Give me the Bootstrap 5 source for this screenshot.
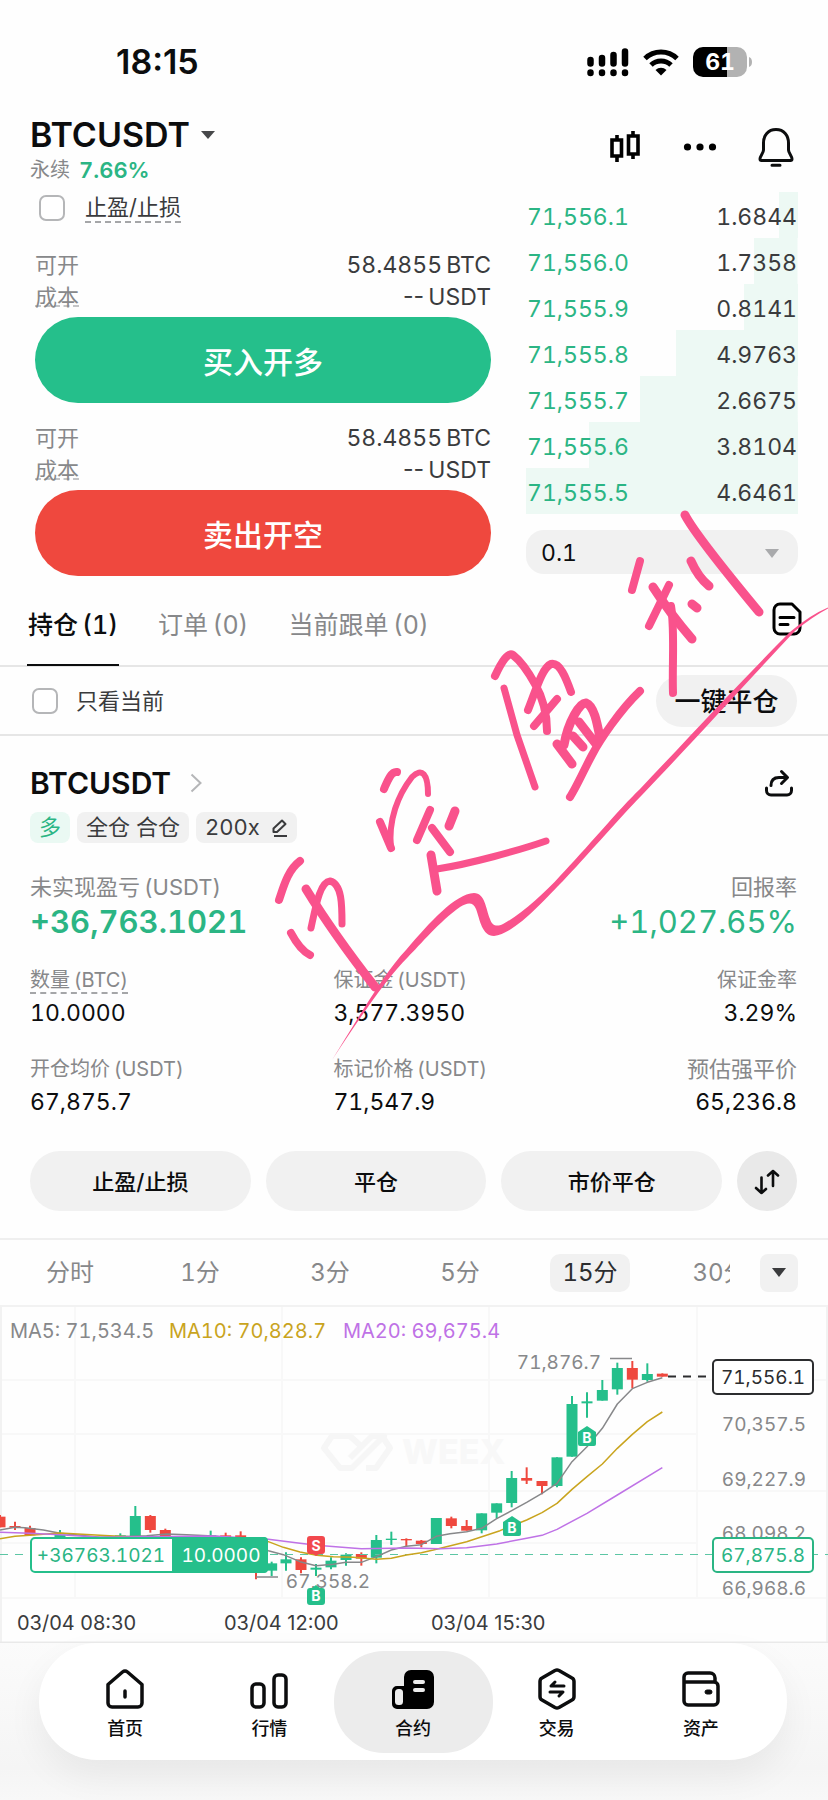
<!DOCTYPE html>
<html lang="zh-CN">
<head>
<meta charset="utf-8">
<meta name="viewport" content="width=device-width, initial-scale=1">
<title>BTCUSDT 永续</title>
<link href="https://cdn.jsdelivr.net/npm/bootstrap@5.3.0/dist/css/bootstrap.min.css" rel="stylesheet">
<style>
:root { --up:#25bf8b; --up-text:#2bb584; --down:#ef483e; --ink:#0c0d0e; --muted:#87888a; --line:#e6e6e6; --pill:#f1f1f1; --pink:#f9528c; }
body { font-family:Inter,"Noto Sans CJK SC",sans-serif; font-size:22px; line-height:32px; font-variant-numeric:tabular-nums; color:var(--ink); background:#fefefe; overflow-x:hidden; }
button, select { font-family:inherit; color:inherit; font-variant-numeric:inherit; }
a { color:inherit; text-decoration:none; }
svg { display:block; flex-shrink:0; }
.up { color:var(--up-text); }
.dim { color:var(--muted); }
.dark-soft { color:#3a3b3d; }
.prop-nums { font-variant-numeric:normal; }
.plain-btn { border:0; background:none; padding:0; }
.status { height:117px; padding:6px 76px 0 116px; }
.clock { font-size:34px; font-weight:600; }
.batt { width:59px; height:30px; }
.topbar { height:66px; padding:0 34px 0 30px; }
.pair { font-size:34px; line-height:36px; font-weight:600; }
.sub { font-size:22px; line-height:26px; margin-top:4px; }
.sub span:first-child { font-size:20px; }
.tools { height:60px; }
.trade { display:grid; grid-template-columns:456fr 272fr; column-gap:35px; padding:0 30px 8px 35px; }
.tick.form-check-input { width:26px; height:26px; margin:0; border:2px solid #b5b6b8; border-radius:7px; background-color:#fff; flex-shrink:0; }
.dashed { border-bottom:2px dashed #a5a6a8; line-height:28px; }
.dashed.tight { height:26px; line-height:32px; border-color:#c4c5c7; }
.tpsl { height:50px; padding-left:4px; gap:20px; }
.pair-row { height:32px; }
.pair-row .dark-soft { font-size:23px; }
.cta { height:86px; border:0; border-radius:43px; font-size:30px; font-weight:500; color:#fff; margin-top:4px; padding:3px 0 0; }
.cta.buy { background:var(--up); }
.cta.sell { background:var(--down); }
.book { padding-top:9px; }
.book-row { height:46px; font-size:23px; padding:3px 1px 0 1px; color:#3a3b3d; background:linear-gradient(#edf9f4,#edf9f4) right/var(--depth) 100% no-repeat; }
.step-wrap { margin-top:16px; }
.step-wrap select { height:44px; border:0; border-radius:18px; background:var(--pill); font-size:23px; line-height:32px; padding:7px 15px 5px; appearance:none; }
.step-wrap svg { position:absolute; right:19px; top:19px; }
.tabs { height:83px; border-bottom:2px solid var(--line); padding:0 26px 0 27px; }
.tabs .plain-btn { font-size:25px; height:83px; color:var(--muted); margin-right:38px; white-space:nowrap; border-bottom:2px solid transparent; padding:2px 1px 0; }
.tabs .plain-btn.active { color:var(--ink); font-weight:500; border-color:var(--ink); }
.tabs .doc { margin:0 0 12px; }
.filter { height:69px; border-bottom:2px solid var(--line); padding:0 31px 0 32px; }
.close-all { height:52px; width:141px; border:0; border-radius:26px; background:var(--pill); font-size:26px; font-weight:500; padding:3px 0 0; white-space:nowrap; }
.position { padding:30px 31px 27px 30px; border-bottom:2px solid #efefef; }
.pos-name { font-size:30px; line-height:34px; font-weight:600; }
.chip { height:31px; line-height:31px; border-radius:8px; background:var(--pill); padding:0 9px; color:#3a3b3d; }
.chip.long { background:#eaf9f3; color:var(--up-text); }
.label-line { line-height:30px; color:var(--muted); white-space:nowrap; }
.big { font-size:31px; line-height:40px; }
.metrics { display:grid; grid-template-columns:303fr 230fr 233fr; row-gap:25px; margin-top:23px; }
.metrics .label-line { font-size:20px; }
.metrics .label-line.wide { font-size:22px; }
.metrics .val { font-size:23px; line-height:32px; margin-top:2px; }
.act { height:60px; border:0; border-radius:30px; background:var(--pill); font-weight:500; padding:1px 0 0; flex:1 1 0; }
.act.round { flex:0 0 60px; background:#e9e9e9; }
.frames { height:65px; padding-right:30px; }
.frames-scroll { overflow:hidden; padding-left:5px; margin-right:30px; }
.frames-scroll .slot { flex:0 0 130px; text-align:center; }
.frames .plain-btn { font-size:24px; height:38px; line-height:38px; color:var(--muted); }
.frames .plain-btn.on { width:80px; border-radius:10px; background:var(--pill); color:#2c2d2f; }
.frames .more { flex:0 0 38px; border-radius:8px; background:var(--pill); }
.chart text { font-family:Inter,"Noto Sans CJK SC",sans-serif; font-size:19px; }
.chart .legend { font-size:20px; }
.chart .axis { font-size:20px; font-variant-numeric:normal; }
.chart .mark-letter { font-size:14px; }
.chart .brand { font-size:34px; }
.dock { background:linear-gradient(#fbfbfb,#f5f5f5 80%,#f8f8f8); padding:0 41px 40px 39px; }
.dock-bar { height:117px; border-radius:58px; background:#fff; padding:0 14px; box-shadow:0 16px 36px rgba(0,0,0,.06); }
.dock-bar a { flex:1 1 0; font-size:18px; line-height:26px; font-weight:500; height:102px; gap:6px; border-radius:50px; padding-top:7px; }
.dock-bar a.on { background:#ececec; margin:0 -8px; flex:0 0 159px; }
.scrawl { position:absolute; left:0; top:0; width:100%; pointer-events:none; }
</style>
</head>
<body>
<div class="position-relative">

<header>
  <div class="status d-flex align-items-center justify-content-between">
    <span class="clock prop-nums">18:15</span>
    <div class="d-flex align-items-center" style="gap:14px">
      <svg width="43" height="30" viewBox="0 0 43 30" stroke="#000" stroke-width="6.500" stroke-linecap="round">
        <path d="M4.500 13v3.500M16 11v5.500M27.500 8v8.500M39 4.500v12M4.500 25.500v.5M16 25.500v.5M27.500 25.500v.5M39 25.500v.5"/>
      </svg>
      <svg width="36" height="28" viewBox="0 0 36 28" fill="none" stroke="#000" stroke-width="5">
        <path d="M2 10.500a23 23 0 0 1 32 0M8 17a14.500 14.500 0 0 1 20 0"/>
        <path d="M18 27.500l-5.500-5.500a8 8 0 0 1 11 0z" fill="#000" stroke="none"/>
      </svg>
      <svg class="batt" viewBox="0 0 59 30">
        <path d="M10 0H34V30H10A10 10 0 0 1 0 20V10A10 10 0 0 1 10 0Z" fill="#000"/>
        <path d="M34 0H44A10 10 0 0 1 54 10V20A10 10 0 0 1 44 30H34Z" fill="#b2b2b2"/>
        <path d="M56 10q3 1 3 5t-3 5z" fill="#b2b2b2"/>
        <text x="27" y="23" text-anchor="middle" font-size="23" font-weight="700" fill="#fff" font-family="Inter,sans-serif">61</text>
      </svg>
    </div>
  </div>
  <div class="topbar d-flex justify-content-between align-items-start">
    <div>
      <button class="plain-btn pair d-flex align-items-center">BTCUSDT
        <svg class="ms-1" width="24" height="10" viewBox="0 0 24 10"><path d="M7 1h14l-7 8z" fill="#47484a"/></svg>
      </button>
      <div class="sub d-flex" style="gap:9px"><span class="dim">永续</span><span class="up fw-semibold">7.66%</span></div>
    </div>
    <div class="tools d-flex align-items-center">
      <button class="plain-btn" aria-label="K线"><svg width="32" height="34" viewBox="0 0 32 34" fill="none" stroke="#000" stroke-width="3.600"><path d="M8 5v5M8 26v6M24 1v5M24 24v5"/><path d="M3 10h9.500v16H3zM19.500 6H29v18h-9.500z"/></svg></button>
      <button class="plain-btn" aria-label="更多" style="margin:0 41px 0 42px"><svg width="34" height="10" viewBox="0 0 34 10"><circle cx="4.500" cy="5" r="3.600"/><circle cx="17" cy="5" r="3.600"/><circle cx="29.500" cy="5" r="3.600"/></svg></button>
      <button class="plain-btn" aria-label="通知"><svg width="36" height="40" viewBox="0 0 36 40" fill="none" stroke="#0c0d0e" stroke-width="3" stroke-linecap="round" stroke-linejoin="round"><path d="M18 2.500C10 2.500 5.500 8.500 5.500 16v7c0 3-3.500 6-3.500 9 0 1 .5 1.500 1.500 1.500h29c1 0 1.500-.5 1.500-1.500 0-3-3.500-6-3.500-9v-7C30.500 8.500 26 2.500 18 2.500zM14 38.200h8"/></svg></button>
    </div>
  </div>
</header>

<main>
<section class="trade">
  <div>
    <div class="tpsl d-flex align-items-center">
      <input class="tick form-check-input" type="checkbox" id="tpsl"><label class="dashed dark-soft" for="tpsl">止盈/止损</label>
    </div>
    <div class="pair-row d-flex justify-content-between mt-3"><span class="dim">可开</span><span class="dark-soft">58.4855&thinsp;BTC</span></div>
    <div class="pair-row d-flex justify-content-between align-items-start"><span class="dim dashed tight">成本</span><span class="dark-soft prop-nums">--&thinsp;USDT</span></div>
    <button class="cta buy w-100">买入开多</button>
    <div class="pair-row d-flex justify-content-between" style="margin-top:19px"><span class="dim">可开</span><span class="dark-soft">58.4855&thinsp;BTC</span></div>
    <div class="pair-row d-flex justify-content-between align-items-start"><span class="dim dashed tight">成本</span><span class="dark-soft prop-nums">--&thinsp;USDT</span></div>
    <button class="cta sell w-100">卖出开空</button>
  </div>
  <div class="book">
    <div class="book-row d-flex justify-content-between align-items-center" style="--depth:7%"><span class="up">71,556.1</span><span>1.6844</span></div>
    <div class="book-row d-flex justify-content-between align-items-center" style="--depth:16%"><span class="up">71,556.0</span><span>1.7358</span></div>
    <div class="book-row d-flex justify-content-between align-items-center" style="--depth:20%"><span class="up">71,555.9</span><span>0.8141</span></div>
    <div class="book-row d-flex justify-content-between align-items-center" style="--depth:45%"><span class="up">71,555.8</span><span>4.9763</span></div>
    <div class="book-row d-flex justify-content-between align-items-center" style="--depth:58%"><span class="up">71,555.7</span><span>2.6675</span></div>
    <div class="book-row d-flex justify-content-between align-items-center" style="--depth:77%"><span class="up">71,555.6</span><span>3.8104</span></div>
    <div class="book-row d-flex justify-content-between align-items-center" style="--depth:100%"><span class="up">71,555.5</span><span>4.6461</span></div>
    <div class="step-wrap position-relative">
      <select class="w-100" aria-label="价格精度"><option>0.1</option></select>
      <svg width="14" height="9" viewBox="0 0 14 9"><path d="M0 0h14L7 9z" fill="#a9aaac"/></svg>
    </div>
  </div>
</section>

<nav class="tabs d-flex align-items-center">
  <button class="plain-btn active">持仓&thinsp;(1)</button>
  <button class="plain-btn">订单&thinsp;(0)</button>
  <button class="plain-btn">当前跟单&thinsp;(0)</button>
  <a href="#" class="doc ms-auto" aria-label="历史记录"><svg width="30" height="34" viewBox="0 0 30 34" fill="none" stroke="#000" stroke-width="3" stroke-linecap="round" stroke-linejoin="round"><path d="M8 2h12l8 8v16a6 6 0 0 1-6 6H8a6 6 0 0 1-6-6V8a6 6 0 0 1 6-6zM8 15.500h14M8 22.500h8"/></svg></a>
</nav>
<div class="filter d-flex align-items-center justify-content-between">
  <div class="d-flex align-items-center" style="gap:18px"><input class="tick form-check-input" type="checkbox" id="only"><label for="only" class="dark-soft">只看当前</label></div>
  <button class="close-all">一键平仓</button>
</div>

<section class="position">
  <div class="d-flex justify-content-between align-items-center">
    <a href="#" class="pos-name d-flex align-items-center">BTCUSDT
      <svg style="margin-left:19px" width="12" height="20" viewBox="0 0 12 20" fill="none" stroke="#b5b6b8" stroke-width="2"><path d="M1.500 1.500l9 8.500-9 8.500"/></svg></a>
    <button class="plain-btn me-1" aria-label="分享"><svg width="28" height="28" viewBox="0 0 28 28" fill="none" stroke="#0c0d0e" stroke-width="3" stroke-linecap="round" stroke-linejoin="round"><path d="M1.500 19v2.500a4.500 4.500 0 0 0 4.500 4.500h16a4.500 4.500 0 0 0 4.500-4.500V19M6 16.500C6 11 9 8.500 14 8.500h8M16.500 2.500l6 6-6 6"/></svg></button>
  </div>
  <div class="d-flex" style="gap:7px;margin-top:12px">
    <span class="chip long">多</span><span class="chip">全仓 合仓</span>
    <button class="plain-btn chip d-flex align-items-center">200x<svg style="margin-left:12px" width="16" height="18" viewBox="0 0 16 18" fill="none" stroke="#3a3b3d" stroke-width="2" stroke-linejoin="round"><path d="M1.500 13V9.500l8.500-8 3.500 3.500-8.500 8zM2 17h13"/></svg></button>
  </div>
  <div class="d-flex justify-content-between" style="margin-top:29px">
    <div><div class="label-line">未实现盈亏&thinsp;(USDT)</div><div class="big up fw-semibold">+36,763.1021</div></div>
    <div class="text-end"><div class="label-line">回报率</div><div class="big up">+1,027.65%</div></div>
  </div>
  <div class="metrics">
    <div><div class="label-line"><span class="dashed">数量&thinsp;(BTC)</span></div><div class="val">10.0000</div></div>
    <div><div class="label-line">保证金&thinsp;(USDT)</div><div class="val">3,577.3950</div></div>
    <div class="text-end"><div class="label-line">保证金率</div><div class="val">3.29%</div></div>
    <div><div class="label-line">开仓均价&thinsp;(USDT)</div><div class="val">67,875.7</div></div>
    <div><div class="label-line">标记价格&thinsp;(USDT)</div><div class="val">71,547.9</div></div>
    <div class="text-end"><div class="label-line wide">预估强平价</div><div class="val">65,236.8</div></div>
  </div>
  <div class="d-flex" style="gap:15px;margin-top:33px">
    <button class="act">止盈/止损</button><button class="act">平仓</button><button class="act">市价平仓</button>
    <button class="act round d-flex align-items-center justify-content-center" aria-label="反手"><svg width="26" height="26" viewBox="0 0 26 26" fill="none" stroke="#0c0d0e" stroke-width="2.600" stroke-linecap="round" stroke-linejoin="round"><path d="M7.500 8.500V24M2 19l5.500 5L12 20M19 17V2M14 6.500L19 2l5 4.500"/></svg></button>
  </div>
</section>

<section>
  <div class="frames d-flex align-items-center">
    <div class="frames-scroll d-flex flex-fill" style="width:0">
      <div class="slot"><button class="plain-btn">分时</button></div>
      <div class="slot"><button class="plain-btn">1分</button></div>
      <div class="slot"><button class="plain-btn">3分</button></div>
      <div class="slot"><button class="plain-btn">5分</button></div>
      <div class="slot"><button class="plain-btn on">15分</button></div>
      <div class="slot"><button class="plain-btn">30分</button></div>
    </div>
    <button class="plain-btn more d-flex align-items-center justify-content-center" aria-label="更多周期"><svg width="14" height="9" viewBox="0 0 14 9"><path d="M0 0h14L7 9z" fill="#3a3b3d"/></svg></button>
  </div>

  <svg class="chart w-100" viewBox="0 0 828 338" fill="none">
    <path d="M0 75H828M0 129H697M0 186H828M0 238H697M0 293H828M75 0V293M282 0V293M489 0V293M697 0V293" stroke="#f8f8f8" stroke-width="2"/>
    <path d="M0 1H828M1 0V338M827 0V338" stroke="#f2f2f2" stroke-width="2"/>
    <path d="M0 337.500H828" stroke="#e9e9e9" stroke-width="2"/>
    <g stroke="#f6f6f6" stroke-width="6" stroke-linejoin="round"><path d="M362 142l-12-11H332l-8 12 16 20h12l24-24 8-8h-12l-22 22M350 131M366 163h10l14-20-8-12h-10"/></g>
    <text class="brand" x="402" y="159" font-weight="800" fill="#f8f8f8">WEEX</text>
    <g id="candles"></g>
    <path d="M0 249.500H828" stroke="#5cc6a4" stroke-dasharray="8 7"/>
    <g id="averages" stroke-width="1.500" stroke-linejoin="round"></g>
    <path d="M668 71.500H708" stroke="#2c2d2f" stroke-width="2" stroke-dasharray="8 7"/>
    <path d="M610 53.500h22M256 272h22" stroke="#87888a" stroke-width="1.500"/>
    <g fill="#87888a">
      <text x="601" y="64" text-anchor="end">71,876.7</text><text x="370" y="283" text-anchor="end">67,358.2</text>
      <text x="806" y="126" text-anchor="end">70,357.5</text><text x="806" y="181" text-anchor="end">69,227.9</text>
      <text x="806" y="235" text-anchor="end">68,098.2</text><text x="806" y="290" text-anchor="end">66,968.6</text>
    </g>
    <text class="legend" x="10" y="33" fill="#87888a">MA5: 71,534.5</text>
    <text class="legend" x="169" y="33" fill="#c9a41e">MA10: 70,828.7</text>
    <text class="legend" x="343" y="33" fill="#bf72e6">MA20: 69,675.4</text>
    <g fill="#3a3b3d">
      <text class="axis" x="17" y="325">03/04 08:30</text><text class="axis" x="224" y="325">03/04 12:00</text><text class="axis" x="431" y="325">03/04 15:30</text>
    </g>
    <rect x="713" y="55" width="100" height="34" rx="4" fill="#fff" stroke="#2c2d2f" stroke-width="2"/>
    <text x="763" y="79" text-anchor="middle" fill="#2c2d2f">71,556.1</text>
    <rect x="713" y="233" width="100" height="34" rx="4" fill="#fff" stroke="#2bb584" stroke-width="2"/>
    <text x="763" y="257" text-anchor="middle" fill="#2bb584">67,875.8</text>
    <rect x="31" y="233" width="236" height="34" rx="4" fill="#fff" stroke="#25bf8b" stroke-width="2"/>
    <path d="M172 232h92a4 4 0 0 1 4 4v28a4 4 0 0 1-4 4h-92z" fill="#25bf8b"/>
    <text x="101" y="257" text-anchor="middle" fill="#2bb584">+36763.1021</text>
    <text x="221" y="257" text-anchor="middle" fill="#fff">10.0000</text>
    <path d="M310 231h12a3 3 0 0 1 3 3v12a3 3 0 0 1-3 3h-3l-3 2-3-2h-3a3 3 0 0 1-3-3v-12a3 3 0 0 1 3-3z" fill="#f2484d"/>
    <g fill="#25bf8b"><path d="M316 280l4 3h2a3 3 0 0 1 3 3v11a3 3 0 0 1-3 3h-12a3 3 0 0 1-3-3v-11a3 3 0 0 1 3-3h2z"/>
      <path d="M587 121l9 6v12a2 2 0 0 1-2 2h-14a2 2 0 0 1-2-2v-12z"/><path d="M512 211l9 6v12a2 2 0 0 1-2 2h-14a2 2 0 0 1-2-2v-12z"/></g>
    <g fill="#fff" font-weight="700" text-anchor="middle">
      <text class="mark-letter" x="316" y="246">S</text><text class="mark-letter" x="316" y="296">B</text>
      <text class="mark-letter" x="587" y="138">B</text><text class="mark-letter" x="512" y="228">B</text>
    </g>
  </svg>
</section>
</main>

<footer class="dock">
  <nav class="dock-bar d-flex align-items-center">
    <a href="#" class="d-flex flex-column align-items-center justify-content-center"><svg width="40" height="42" viewBox="0 0 40 42" fill="none" stroke="#0c0d0e" stroke-width="3.500" stroke-linecap="round" stroke-linejoin="round"><path d="M3 16.500L17.500 4q2.500-2 5 0L37 16.500V35a4 4 0 0 1-4 4H7a4 4 0 0 1-4-4zM20 23v6"/></svg>首页</a>
    <a href="#" class="d-flex flex-column align-items-center justify-content-center"><svg width="40" height="42" viewBox="0 0 40 42" fill="none" stroke="#0c0d0e" stroke-width="3.500"><rect x="3" y="16" width="12" height="23" rx="4"/><rect x="25" y="7" width="12" height="32" rx="4"/></svg>行情</a>
    <a href="#" class="on d-flex flex-column align-items-center justify-content-center"><svg width="44" height="42" viewBox="0 0 44 42"><path d="M13 9a7 7 0 0 1 7-7h16a7 7 0 0 1 7 7v25a7 7 0 0 1-7 7H6a5 5 0 0 1-5-5V23a5 5 0 0 1 5-5h7z"/><rect x="4" y="21" width="8" height="16" rx="3.500" fill="#ececec"/><path d="M24 14h8M24 22h8" stroke="#ececec" stroke-width="4" stroke-linecap="round"/></svg>合约</a>
    <a href="#" class="d-flex flex-column align-items-center justify-content-center"><svg width="40" height="42" viewBox="0 0 40 42" fill="none" stroke="#0c0d0e" stroke-width="3.500" stroke-linecap="round" stroke-linejoin="round"><path d="M18 2.500q2-1 4 0L35 10q2 1 2 3.500v15q0 2.500-2 3.500l-13 7.500q-2 1-4 0L5 32q-2-1-2-3.500v-15Q3 11 5 10z"/><path stroke-width="3" d="M27 18H14l4-4M13 24h13l-4 4"/></svg>交易</a>
    <a href="#" class="d-flex flex-column align-items-center justify-content-center"><svg width="40" height="42" viewBox="0 0 40 42" fill="none" stroke="#0c0d0e" stroke-width="3.500" stroke-linejoin="round"><path d="M3 9a4 4 0 0 1 4-4h22a5 5 0 0 1 5 5v4M3 9v24a4 4 0 0 0 4 4h26a4 4 0 0 0 4-4V18a4 4 0 0 0-4-4H3"/><rect x="24" y="22" width="7" height="4" rx="2" fill="#0c0d0e" stroke-width="1"/></svg>资产</a>
  </nav>
</footer>

<svg class="scrawl" viewBox="0 0 828 1800" fill="none" stroke="#f9528c" stroke-width="8" stroke-linecap="round" stroke-linejoin="round" aria-hidden="true">
  <path d="M685 515C695 534 730 577 759 612M691 561Q698 577 709 586M692 604l5 4M653 587C664 604 679 624 692 639" stroke-width="9"/>
  <path d="M640 561L632 590M669 585L649 626M671 606C675 630 672 665 673 693"/>
  <path d="M495 676C502 661 508 652 513 655C522 662 530 675 535 684C543 698 547 715 547 731M528 710C536 690 542 668 551 664C560 662 566 678 571 692M534 726L557 699"/>
  <path d="M504 688L517 735L535 787" stroke-width="7"/>
  <path d="M557 744L572 764M564 745C568 722 580 702 586 703C594 706 597 722 600 738M573 736L583 747M579 722L596 744" stroke-width="9"/>
  <path d="M640 691C620 710 600 740 592 755C584 770 576 788 570 797"/>
  <path d="M397 772C391 771 387 782 384 789M380 822L391 848M430 810L417 840M432 828L450 852"/>
  <path d="M391 848C388 820 398 795 412 777C422 767 428 774 428 794" stroke-width="6"/>
  <path d="M455 811L449 826M431 855L437 891" stroke-width="9"/>
  <path d="M437 869C470 864 520 850 546 841" stroke-width="7"/>
  <path d="M300 861C288 870 284 885 279 900M291 933Q300 950 310 955"/>
  <path d="M306 889C325 920 350 955 375 987" stroke-width="9"/>
  <path d="M311 928C316 905 320 882 330 881C342 884 342 905 342 924" stroke-width="7"/>
  <path fill="#f9528c" stroke="none" d="M332 1060C360 1015 385 972 406 950C430 922 455 894 474 893C485 893 486 909 490 919C492 926 497 927 503 924C520 915 545 893 560 876C585 850 620 808 640 789C690 736 745 677 790 632Q810 615 828 607.500L828 608.500Q812 617 795 631C747 682 690 745 642 795C615 823 585 858 563 881C545 899 515 934 494 936C482 936 480 920 476 909C473 902 468 902 460 907C440 921 420 945 408 957C385 980 355 1025 332 1060Z"/>
</svg>
</div>

<script src="https://cdn.jsdelivr.net/npm/bootstrap@5.3.0/dist/js/bootstrap.bundle.min.js"></script>
<script>
// Chart data is stored on a grid three times finer than the drawing.
// Each candle: [centre x, high, body top, body bottom, low, rising]
const candles = [
  [0,645,650,682,682,0],[45,665,678,683,690,0],[90,677,684,706,706,0],[180,690,704,712,712,1],[361,700,706,712,712,1],
  [406,618,648,712,712,1],[451,645,648,690,698,0],[496,686,690,712,712,0],[632,692,706,712,712,1],[677,698,706,712,712,0],
  [722,694,706,712,712,0],[768,790,815,815,838,0],[815,785,790,812,828,1],[858,757,778,790,812,1],[903,772,778,810,820,0],
  [948,792,803,809,828,1],[993,772,782,802,808,1],[1038,760,764,780,797,1],[1084,757,762,776,797,0],[1129,705,720,773,790,1],
  [1174,695,716,720,735,1],[1219,715,717,721,738,0],[1264,720,722,732,742,0],[1309,654,654,732,732,1],[1354,650,655,678,685,0],
  [1400,660,678,692,692,0],[1445,640,640,691,700,1],[1490,610,610,638,655,1],[1535,513,534,609,622,1],[1580,502,534,542,552,0],
  [1626,543,543,558,583,0],[1671,472,472,558,562,1],[1716,288,312,470,470,1],[1761,277,304,310,353,1],[1807,240,270,302,302,1],
  [1852,188,204,268,284,1],[1897,183,204,239,265,0],[1942,190,222,240,245,1],[1987,220,221,230,230,0]
];
const averages = {
  '#87888a': '0,690 45,682 75,683 130,690 180,700 300,712 440,707 500,702 560,704 640,708 700,714 805,752 850,764 900,785 948,797 1000,793 1038,787 1084,787 1129,770 1174,750 1219,739 1264,734 1309,709 1350,701 1400,695 1445,685 1490,656 1535,632 1580,607 1626,580 1671,550 1716,485 1761,440 1807,385 1852,312 1897,266 1942,247 1987,233',
  '#c9a41e': '0,716 45,709 90,706 180,699 300,706 400,711 700,715 805,725 850,742 900,756 950,766 1000,770 1060,772 1129,778 1174,775 1219,765 1264,758 1300,750 1400,725 1500,692 1580,660 1626,638 1671,610 1716,568 1761,530 1807,492 1852,445 1897,403 1942,365 1987,336',
  '#bf72e6': '0,697 90,700 180,704 300,712 640,708 805,718 900,730 950,736 1084,746 1219,744 1320,746 1400,743 1490,732 1580,715 1626,706 1671,688 1761,640 1852,585 1987,503'
};
const y = v => v / 3 - 5;
document.getElementById('candles').innerHTML = candles.map(([x, hi, top, bot, lo, rise]) => {
  const c = rise ? '#25bf8b' : '#ef483e', cx = x / 3;
  return `<path d="M${cx} ${y(hi)}V${y(lo)}" stroke="${c}" stroke-width="2"/><rect x="${cx - 5.5}" y="${y(top)}" width="11" height="${(bot - top) / 3}" fill="${c}"/>`;
}).join('');
document.getElementById('averages').innerHTML = Object.entries(averages).map(([c, pts]) =>
  `<polyline stroke="${c}" points="${pts.split(' ').map(p => { const [a, b] = p.split(','); return a / 3 + ',' + y(b); }).join(' ')}"/>`).join('');
</script>
</body>
</html>
